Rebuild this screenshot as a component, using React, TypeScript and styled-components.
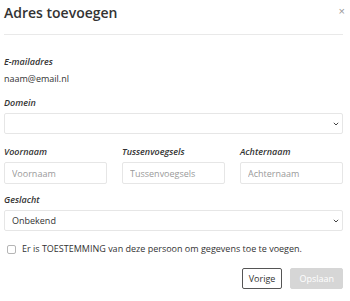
import React from 'react';
import styled, { createGlobalStyle } from 'styled-components';

const GlobalStyle = createGlobalStyle`
  body {
    margin: 0;
    background: #fff;
    font-family: "Open Sans", "Liberation Sans", sans-serif;
    color: #333;
  }
`;

const Modal = styled.div`
  width: 339px;
  padding: 0 7px 0 4px;
`;

const Header = styled.div`
  display: flex;
  justify-content: space-between;
  align-items: flex-start;
  height: 34px;
  border-bottom: 1px solid #e9e9e9;
`;

const Title = styled.h2`
  margin: 0;
  padding-top: 3px;
  font-size: 14px;
  line-height: 20px;
  font-weight: 600;
  color: #333;
`;

const Close = styled.button`
  border: 0;
  background: none;
  padding: 0;
  margin-top: 5px;
  margin-right: -2px;
  font-size: 11px;
  line-height: 12px;
  color: #999;
  cursor: pointer;
`;

const Body = styled.div`
  padding-top: 20px;
  display: flex;
  flex-direction: column;
`;

const Field = styled.div<{ $mb?: number }>`
  display: flex;
  flex-direction: column;
  margin-bottom: ${(p) => p.$mb ?? 8}px;
`;

const Label = styled.label`
  font-size: 9px;
  line-height: 14px;
  font-weight: 600;
  font-style: italic;
  color: #333;
  margin-bottom: 3px;
`;

const Value = styled.div`
  font-size: 9px;
  line-height: 14px;
  color: #333;
`;

const SelectBox = styled.div`
  height: 21px;
  border: 1px solid #e6e6e6;
  border-radius: 2px;
  box-sizing: border-box;
  display: flex;
  align-items: center;
  padding: 0 3px 0 7px;
  font-size: 9px;
  color: #333;
`;

const Chevron = styled.svg`
  margin-left: auto;
  width: 6px;
  height: 4px;
`;

const Row = styled.div`
  display: grid;
  grid-template-columns: repeat(3, 1fr);
  column-gap: 15px;
  margin-bottom: 9px;
`;

const Input = styled.input`
  height: 22px;
  box-sizing: border-box;
  border: 1px solid #e6e6e6;
  border-radius: 2px;
  padding: 0 7px;
  font-family: inherit;
  font-size: 9px;
  color: #333;
  width: 100%;
  &::placeholder {
    color: #9a9a9a;
  }
`;

const Check = styled.label`
  display: flex;
  align-items: center;
  gap: 6px;
  margin-top: 11px;
  padding-left: 3px;
  font-size: 9px;
  line-height: 14px;
  color: #333;
`;

const Box = styled.span`
  width: 7px;
  height: 7px;
  border: 1px solid #b5b5b5;
  border-radius: 2px;
  display: inline-block;
`;

const Footer = styled.div`
  display: flex;
  justify-content: flex-end;
  gap: 8px;
  margin-top: 12px;
`;

const Button = styled.button<{ $primary?: boolean }>`
  height: 21px;
  box-sizing: border-box;
  padding: 0 ${(p) => (p.$primary ? 8 : 6)}px;
  font-family: inherit;
  font-size: 9px;
  border-radius: 2px;
  border: 1px solid ${(p) => (p.$primary ? '#d6d6d6' : '#555')};
  background: ${(p) => (p.$primary ? '#d6d6d6' : '#fff')};
  color: ${(p) => (p.$primary ? '#fff' : '#333')};
`;

const ChevronIcon = () => (
  <Chevron viewBox="0 0 6 4">
    <path d="M0.8 0.8l2.2 2.2L5.2 0.8" fill="none" stroke="#444" strokeWidth="1" />
  </Chevron>
);

const App = () => (
  <>
    <GlobalStyle />
    <Modal>
      <Header>
        <Title>Adres toevoegen</Title>
        <Close>×</Close>
      </Header>
      <Body>
        <Field $mb={10}>
          <Label>E-mailadres</Label>
          <Value>naam@email.nl</Value>
        </Field>
        <Field $mb={11}>
          <Label>Domein</Label>
          <SelectBox>
            <ChevronIcon />
          </SelectBox>
        </Field>
        <Row>
          <Field $mb={0}>
            <Label>Voornaam</Label>
            <Input placeholder="Voornaam" />
          </Field>
          <Field $mb={0}>
            <Label>Tussenvoegsels</Label>
            <Input placeholder="Tussenvoegsels" />
          </Field>
          <Field $mb={0}>
            <Label>Achternaam</Label>
            <Input placeholder="Achternaam" />
          </Field>
        </Row>
        <Field $mb={0}>
          <Label>Geslacht</Label>
          <SelectBox>
            Onbekend
            <ChevronIcon />
          </SelectBox>
        </Field>
        <Check>
          <Box />
          Er is TOESTEMMING van deze persoon om gegevens toe te voegen.
        </Check>
        <Footer>
          <Button>Vorige</Button>
          <Button $primary>Opslaan</Button>
        </Footer>
      </Body>
    </Modal>
  </>
);

export default App;
